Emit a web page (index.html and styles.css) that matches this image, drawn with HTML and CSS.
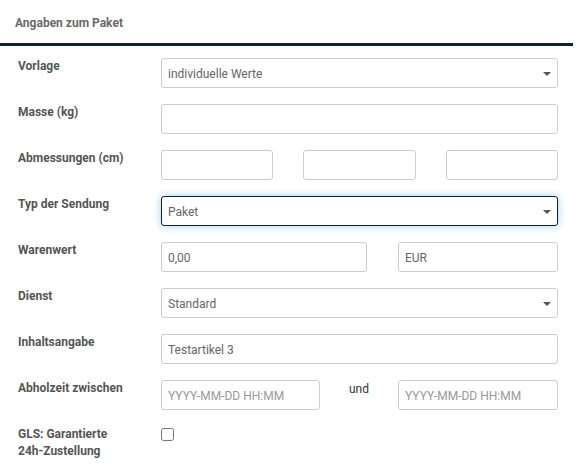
FILE: index.html
```html
<!DOCTYPE html>
<html lang="de">
<head>
<meta charset="utf-8">
<title>Angaben zum Paket</title>
<link rel="stylesheet" href="styles.css">
</head>
<body>
<div class="panel">
  <div class="panel-heading">Angaben zum Paket</div>
  <div class="panel-body">
    <div class="row">
      <label class="lbl">Vorlage</label>
      <div class="ctl">
        <div class="field select"><span class="val">individuelle Werte</span><i class="caret"></i></div>
      </div>
    </div>
    <div class="row">
      <label class="lbl">Masse (kg)</label>
      <div class="ctl"><div class="field"></div></div>
    </div>
    <div class="row">
      <label class="lbl">Abmessungen (cm)</label>
      <div class="ctl split3">
        <div class="field"></div>
        <div class="field"></div>
        <div class="field"></div>
      </div>
    </div>
    <div class="row">
      <label class="lbl">Typ der Sendung</label>
      <div class="ctl">
        <div class="field select focus"><span class="val">Paket</span><i class="caret"></i></div>
      </div>
    </div>
    <div class="row">
      <label class="lbl">Warenwert</label>
      <div class="ctl split2">
        <div class="field grow"><span class="val">0,00</span></div>
        <div class="field narrow"><span class="val">EUR</span></div>
      </div>
    </div>
    <div class="row">
      <label class="lbl">Dienst</label>
      <div class="ctl">
        <div class="field select"><span class="val">Standard</span><i class="caret"></i></div>
      </div>
    </div>
    <div class="row">
      <label class="lbl">Inhaltsangabe</label>
      <div class="ctl"><div class="field"><span class="val">Testartikel 3</span></div></div>
    </div>
    <div class="row">
      <label class="lbl">Abholzeit zwischen</label>
      <div class="ctl range">
        <div class="field grow"><span class="ph">YYYY-MM-DD HH:MM</span></div>
        <div class="und">und</div>
        <div class="field narrow"><span class="ph">YYYY-MM-DD HH:MM</span></div>
      </div>
    </div>
    <div class="row">
      <label class="lbl">GLS: Garantierte<br>24h-Zustellung</label>
      <div class="ctl"><input type="checkbox" class="chk"></div>
    </div>
  </div>
</div>
</body>
</html>
```

FILE: styles.css
```css
html, body {
  margin: 0;
  padding: 0;
  background: #fff;
}
body {
  font-family: Roboto, "Liberation Sans", Arial, sans-serif;
  font-size: 12px;
  color: #555;
}
.panel {
  width: 573px;
}
.panel-heading {
  padding: 15px 15px 11px 15px;
  line-height: 17px;
  font-weight: bold;
  color: #6a6a6a;
  border-bottom: 3px solid #0e2436;
}
.panel-body {
  padding: 12px 15px 0 18px;
}
.row {
  display: flex;
  align-items: flex-start;
  margin-bottom: 16px;
}
.lbl {
  width: 143px;
  flex: none;
  font-weight: bold;
  line-height: 16.5px;
  color: #555;
}
.ctl {
  flex: 1;
  display: flex;
  min-width: 0;
}
.field {
  position: relative;
  flex: 1;
  height: 30px;
  box-sizing: border-box;
  border: 1px solid #ccc;
  border-radius: 3px;
  padding: 1px 6px 0 6px;
  display: flex;
  align-items: center;
  background: #fff;
}
.val {
  color: #666;
}
.ph {
  color: #999;
}
.select .caret {
  position: absolute;
  right: 6px;
  top: 13px;
  width: 0;
  height: 0;
  border-left: 4px solid transparent;
  border-right: 4px solid transparent;
  border-top: 4px solid #555;
}
.focus {
  border-color: #0e2436;
  box-shadow: 0 0 8px rgba(102, 175, 233, 0.6);
}
.split3 {
  gap: 30px;
}
.split2 {
  gap: 31px;
}
.narrow {
  flex: none;
  width: 160px;
}
.und {
  width: 78px;
  flex: none;
  text-align: center;
  line-height: 16px;
  padding-top: 1px;
  color: #333;
}
.chk {
  margin: 2px 0 0 0;
  width: 13px;
  height: 13px;
}
```
